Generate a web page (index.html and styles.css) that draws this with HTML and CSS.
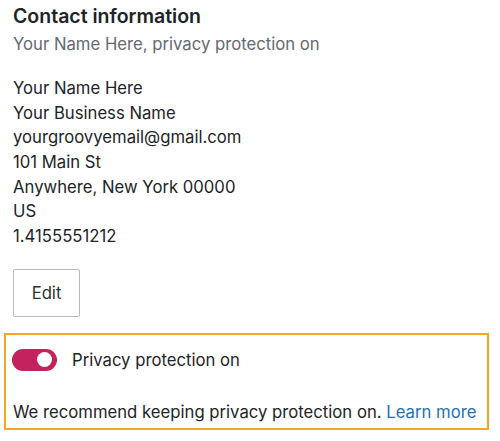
FILE: index.html
```html
<!DOCTYPE html>
<html>
<head>
<meta charset="utf-8">
<link rel="stylesheet" href="styles.css">
</head>
<body>
<main class="page">
  <h2 class="title">Contact information</h2>
  <p class="subtitle">Your Name Here, privacy protection on</p>
  <div class="address">
    <div>Your Name Here</div>
    <div>Your Business Name</div>
    <div>yourgroovyemail@gmail.com</div>
    <div>101 Main St</div>
    <div>Anywhere, New York 00000</div>
    <div>US</div>
    <div>1.4155551212</div>
  </div>
  <button class="edit">Edit</button>
  <section class="privacy">
    <div class="toggle-row">
      <span class="toggle"><span class="knob"></span></span>
      <span class="toggle-label">Privacy protection on</span>
    </div>
    <p class="note">We recommend keeping privacy protection on. <a class="link" href="#">Learn more</a></p>
  </section>
</main>
</body>
</html>
```
FILE: styles.css
```css
html, body {
  margin: 0;
  padding: 0;
  background: #fff;
}
.page {
  font-family: Inter, "Noto Sans", "Liberation Sans", sans-serif;
  color: #1d2327;
  padding: 0 11px 0 13px;
  font-size: 16.7px;
}
.title {
  margin: 0;
  padding-top: 4px;
  font-size: 19.5px;
  font-weight: 600;
  line-height: 24px;
  color: #1d2327;
}
.subtitle {
  margin: 4px 0 0;
  font-size: 16.7px;
  line-height: 24px;
  color: #646970;
}
.address {
  margin-top: 20px;
  line-height: 24.67px;
  font-size: 16.7px;
}
.edit {
  margin-top: 20px;
  font-family: inherit;
  font-size: 16.7px;
  color: #2c3338;
  background: #fff;
  border: 1px solid #b9babd;
  border-radius: 2px;
  width: 67px;
  height: 48px;
  padding: 0;
  display: block;
}
.privacy {
  margin: 16px 0 0 -9px;
  border: 2px solid #f5a623;
  padding: 14px 7px 4px 6px;
}
.toggle-row {
  display: flex;
  align-items: center;
  gap: 15px;
}
.toggle {
  width: 45px;
  height: 22px;
  border-radius: 11px;
  background: #c4225c;
  position: relative;
  flex: none;
}
.knob {
  position: absolute;
  right: 5px;
  top: 3.5px;
  width: 15px;
  height: 15px;
  border-radius: 50%;
  background: #fff;
}
.toggle-label {
  font-size: 16.7px;
  color: #1d2327;
}
.note {
  margin: 29px 0 0 1px;
  font-size: 16.7px;
  line-height: 24px;
}
.link {
  color: #2271b1;
  text-decoration: none;
}
```
